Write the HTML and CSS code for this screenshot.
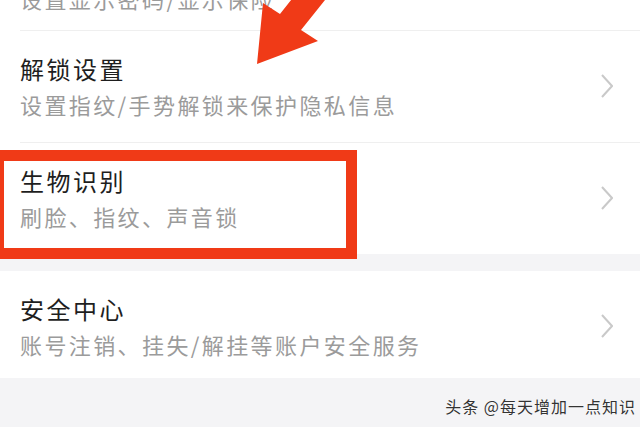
FILE: index.html
```html
<!DOCTYPE html>
<html lang="zh-CN">
<head>
    <meta charset="UTF-8">
    <meta name="viewport" content="width=device-width, initial-scale=1.0">
    <title>隐私设置</title>
    <link rel="stylesheet" href="styles.css">
</head>
<body>
    <div class="screen">

        <div class="peek">
            <span class="item-sub">设置显示密码/显示保险</span>
        </div>

        <div class="group">
            <div class="item">
                <div class="item-text">
                    <div class="item-title">解锁设置</div>
                    <div class="item-sub">设置指纹/手势解锁来保护隐私信息</div>
                </div>
                <svg class="chevron" width="12" height="24" viewBox="0 0 12 24">
                    <polyline points="1,1 11,12 1,23" />
                </svg>
            </div>

            <div class="item item-boxed">
                <div class="item-text">
                    <div class="item-title">生物识别</div>
                    <div class="item-sub">刷脸、指纹、声音锁</div>
                </div>
                <svg class="chevron" width="12" height="24" viewBox="0 0 12 24">
                    <polyline points="1,1 11,12 1,23" />
                </svg>
                <span class="highlight"></span>
            </div>
        </div>

        <div class="group">
            <div class="item item-short">
                <div class="item-text">
                    <div class="item-title">安全中心</div>
                    <div class="item-sub">账号注销、挂失/解挂等账户安全服务</div>
                </div>
                <svg class="chevron" width="12" height="24" viewBox="0 0 12 24">
                    <polyline points="1,1 11,12 1,23" />
                </svg>
            </div>
        </div>

        <div class="footer">
            <span class="watermark">头条 @每天增加一点知识</span>
        </div>

        <svg class="arrow" width="640" height="427" viewBox="0 0 640 427">
            <polygon points="257,64 263,3 280,14 299,-10 333,-10 301,30 318,41" />
        </svg>
    </div>
</body>
</html>
```

FILE: styles.css
```css
* {
    margin: 0;
    padding: 0;
    box-sizing: border-box;
    font-family: "Noto Sans CJK SC", "Noto Sans", sans-serif;
}

body {
    background-color: #f4f4f6;
    color: #222;
}

.screen {
    position: relative;
    width: 640px;
    height: 427px;
    overflow: hidden;
}

.peek {
    height: 30px;
    padding-left: 20px;
    background-color: #fff;
    display: flex;
    align-items: flex-end;
    overflow: hidden;
}

.peek .item-sub {
    margin-bottom: 17px;
}

.group {
    background-color: #fff;
}

.group + .group {
    margin-top: 17px;
}

.item {
    position: relative;
    display: flex;
    align-items: center;
    justify-content: space-between;
    margin-left: 20px;
    padding: 22px 27px 23px 0;
    border-top: 1px solid #efefef;
}

.group + .group .item:first-child {
    border-top: none;
}

.item-short {
    padding-top: 22px;
    padding-bottom: 19px;
}

.item-text {
    display: flex;
    flex-direction: column;
    gap: 4px;
}

.item-title {
    font-size: 24px;
    line-height: 32px;
    letter-spacing: 2.5px;
    color: #1e1e1e;
}

.item-sub {
    font-size: 22px;
    line-height: 30px;
    letter-spacing: 2.4px;
    color: #9b9b9b;
    white-space: nowrap;
}

.chevron polyline {
    fill: none;
    stroke: #c9c9c9;
    stroke-width: 2;
}

.highlight {
    position: absolute;
    left: -27px;
    top: 7px;
    width: 364px;
    height: 109px;
    border: 11px solid #f03a17;
    pointer-events: none;
}

.footer {
    display: flex;
    justify-content: flex-end;
    padding: 18px 4px 0 0;
    background-color: #f4f4f6;
}

.watermark {
    font-size: 16px;
    line-height: 20px;
    letter-spacing: 1px;
    color: #333;
    text-shadow: 0 0 1px #fff, 0 0 1px #fff;
}

.arrow {
    position: absolute;
    top: 0;
    left: 0;
    pointer-events: none;
}

.arrow polygon {
    fill: #f03a17;
}
```
